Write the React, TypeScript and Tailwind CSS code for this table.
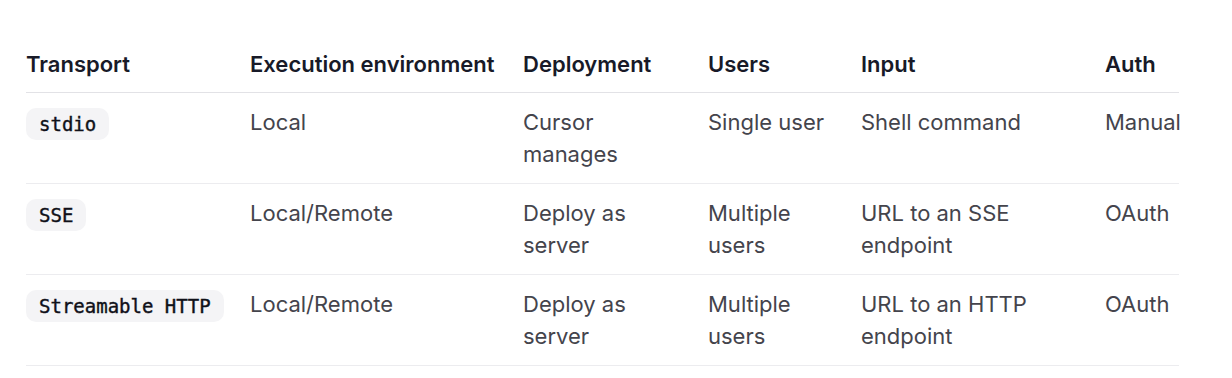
import React from 'react';

const rows: { transport: string; env: string; deploy: string; users: string; input: string; auth: string }[] = [
    { transport: 'stdio', env: 'Local', deploy: 'Cursor manages', users: 'Single user', input: 'Shell command', auth: 'Manual' },
    { transport: 'SSE', env: 'Local/Remote', deploy: 'Deploy as server', users: 'Multiple users', input: 'URL to an SSE endpoint', auth: 'OAuth' },
    { transport: 'Streamable HTTP', env: 'Local/Remote', deploy: 'Deploy as server', users: 'Multiple users', input: 'URL to an HTTP endpoint', auth: 'OAuth' },
];

const headers = ['Transport', 'Execution environment', 'Deployment', 'Users', 'Input', 'Auth'];

const App: React.FC = () => {
    return (
        <div className="w-[1232px] h-[378px] bg-white pt-[48px] pl-[26px] font-['Inter',sans-serif]">
            <div className="grid w-[1153px] grid-cols-[224px_273px_185px_153px_244px_74px]">
                {headers.map((h) => (
                    <div key={h} className="border-b border-[#e2e2e6] pb-[12px] text-[22px] leading-[32px] font-semibold text-[#181a28] whitespace-nowrap">
                        {h}
                    </div>
                ))}
                {rows.map((r) => (
                    <React.Fragment key={r.transport}>
                        <div className="border-b border-[#ececef] pt-[15px] pb-[12px]">
                            <code className="inline-block rounded-[10px] bg-[#f4f4f6] px-[13px] text-[19px] leading-[32px] text-[#101119] font-['DejaVu_Sans_Mono',monospace] [-webkit-text-stroke:0.4px_#101119]">
                                {r.transport}
                            </code>
                        </div>
                        {[r.env, r.deploy, r.users, r.input].map((v, i) => (
                            <div key={i} className="border-b border-[#ececef] py-[13px] pr-[24px] text-[22px] leading-[32px] text-[#44444c]">
                                {v}
                            </div>
                        ))}
                        <div className="border-b border-[#ececef] py-[13px] text-[22px] leading-[32px] text-[#44444c] whitespace-nowrap">
                            {r.auth}
                        </div>
                    </React.Fragment>
                ))}
            </div>
        </div>
    );
};

export default App;
